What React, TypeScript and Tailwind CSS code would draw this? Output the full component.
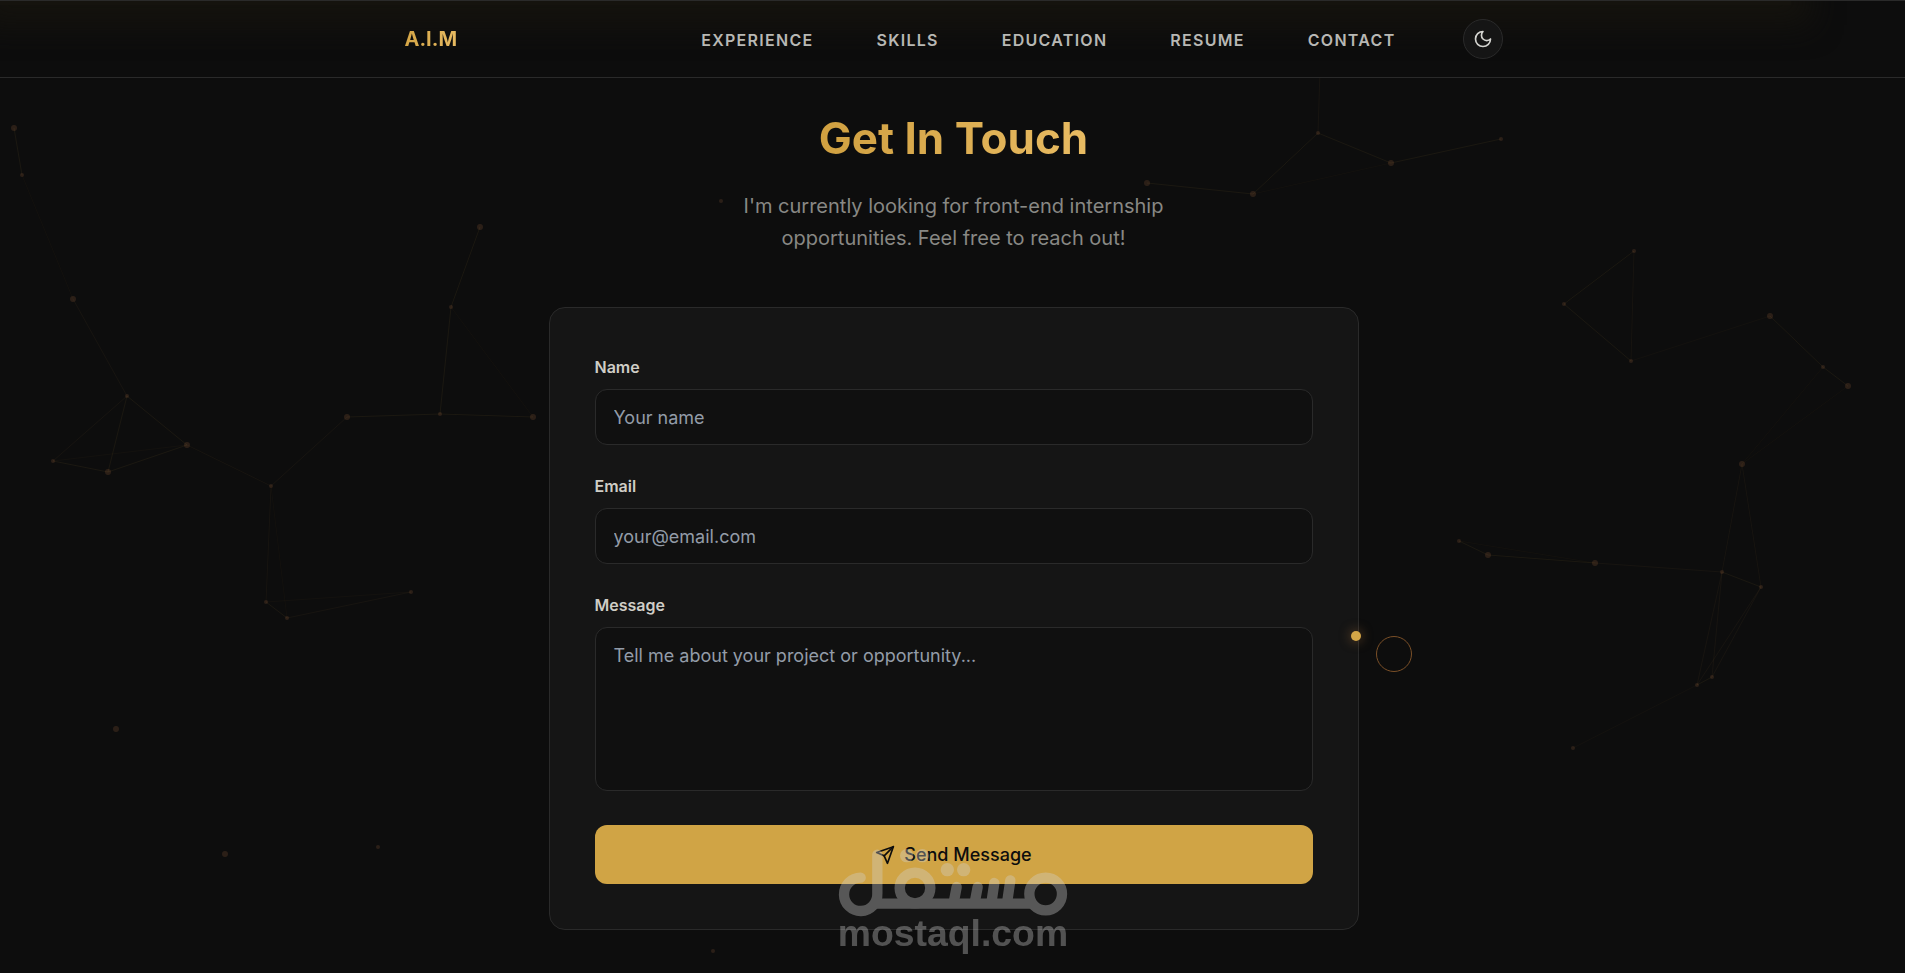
import React, { useState } from "react";

type Dot = [x: number, y: number, r: number];

const navLinks = ["Experience", "Skills", "Education", "Resume", "Contact"];

const dots: Dot[] = [
    [14, 128, 3], [22, 175, 2], [73, 299, 3], [127, 396, 2], [187, 445, 3],
    [53, 461, 2], [108, 472, 3], [271, 486, 2], [266, 602, 2], [287, 618, 2],
    [411, 592, 2], [347, 417, 3], [440, 414, 2], [533, 417, 3], [451, 307, 2],
    [480, 227, 3], [116, 729, 3], [225, 854, 3], [378, 847, 2], [713, 951, 2],
    [721, 201, 2], [1318, 133, 2], [1391, 163, 3], [1501, 139, 2], [1147, 183, 3],
    [1253, 194, 3], [1634, 251, 2], [1564, 304, 2], [1631, 361, 2], [1770, 316, 3],
    [1823, 367, 2], [1848, 386, 3], [1742, 464, 3], [1459, 541, 2], [1488, 555, 3],
    [1595, 563, 3], [1722, 572, 2], [1761, 587, 2], [1712, 677, 2], [1697, 685, 2],
    [1573, 748, 2],
];

// Pairs of dot indexes, split by how close the two dots are
const nearLinks = [
    [0, 1], [3, 4], [3, 6], [5, 6], [4, 6], [8, 9], [11, 12], [12, 13], [14, 15],
    [21, 22], [21, 25], [24, 25], [22, 23], [29, 30], [30, 31], [33, 34], [34, 35],
    [36, 37], [38, 39], [12, 14], [26, 27], [27, 28],
];

const farLinks = [
    [2, 3], [3, 5], [4, 7], [7, 8], [9, 10], [7, 11], [26, 28], [32, 36],
    [32, 37], [35, 36], [36, 38], [36, 39], [37, 38], [37, 39],
];

const faintLinks = [
    [1, 2], [4, 5], [7, 9], [8, 10], [13, 14], [22, 25], [28, 29], [30, 32],
    [31, 32], [33, 35], [39, 40],
];

function ParticleField() {
    const drawLink = ([a, b]: number[]) => (
        <line key={`${a}-${b}`} x1={dots[a][0]} y1={dots[a][1]} x2={dots[b][0]} y2={dots[b][1]} />
    );

    return (
        <svg
            className="absolute inset-0 w-full h-full pointer-events-none"
            viewBox="0 0 1905 973"
            preserveAspectRatio="xMidYMid slice"
            aria-hidden="true"
        >
            <g stroke="#d4a647" strokeOpacity="0.07">{nearLinks.map(drawLink)}</g>
            <g stroke="#d4a647" strokeOpacity="0.05">
                {farLinks.map(drawLink)}
                <line x1="1318" y1="133" x2="1320" y2="70" />
            </g>
            <g stroke="#d4a647" strokeOpacity="0.03">{faintLinks.map(drawLink)}</g>
            <g fill="#c47f50" fillOpacity="0.17">
                {dots.map(([x, y, r]) => (
                    <circle key={`${x}-${y}`} cx={x} cy={y} r={r} />
                ))}
            </g>
        </svg>
    );
}

function MoonIcon() {
    return (
        <svg width="20" height="20" viewBox="0 0 24 24" fill="none" stroke="currentColor" strokeWidth="2" strokeLinecap="round" strokeLinejoin="round" aria-hidden="true">
            <path d="M12 3a6 6 0 0 0 9 9 9 9 0 1 1-9-9Z" />
        </svg>
    );
}

function SendIcon() {
    return (
        <svg width="20" height="20" viewBox="0 0 24 24" fill="none" stroke="currentColor" strokeWidth="2" strokeLinecap="round" strokeLinejoin="round" aria-hidden="true">
            <path d="M22 2 11 13" />
            <path d="m22 2-7 20-4-9-9-4Z" />
        </svg>
    );
}

function Header() {
    return (
        <header className="relative h-[78px] px-6 border-y border-[#2a2a2a] bg-[#0d0d0d] overflow-hidden">
            <div className="absolute top-0 left-0 w-[94%] h-1 bg-[#15130e] shadow-[0_0_30px_20px_#15130e]" />

            <div className="relative max-w-[1100px] h-full mx-auto flex items-center justify-between">
                <a
                    href="#home"
                    className="px-[2px] text-xl leading-8 font-bold bg-gradient-to-r from-[#d4a545] to-[#e8bb62] bg-clip-text text-transparent"
                >
                    A.I.M
                </a>
                <div className="flex items-center gap-[67px]">
                    <nav className="flex items-center gap-[63px]">
                        {navLinks.map((label) => (
                            <a
                                key={label}
                                href={`#${label.toLowerCase()}`}
                                className="pt-[2px] text-base font-semibold uppercase tracking-[0.08em] text-[#b8b8b4]"
                            >
                                {label}
                            </a>
                        ))}
                    </nav>
                    <button
                        type="button"
                        aria-label="Toggle theme"
                        className="w-10 h-10 flex items-center justify-center rounded-full border border-[#2a2a2a] bg-[#151515] text-[#d4d4d0]"
                    >
                        <MoonIcon />
                    </button>
                </div>
            </div>
        </header>
    );
}

const labelClass = "text-base leading-7 font-semibold text-[#cfcdc6]";
const fieldClass =
    "w-full px-[18px] rounded-xl border border-[#2a2a2a] bg-[#101010] text-lg text-[#e5e5e5] placeholder:text-[#939ca8] outline-none";

function ContactForm() {
    const [name, setName] = useState("");
    const [email, setEmail] = useState("");
    const [message, setMessage] = useState("");

    return (
        <form
            onSubmit={(e) => e.preventDefault()}
            className="w-full max-w-[810px] mx-auto p-[45px] flex flex-col gap-[27px] rounded-2xl border border-[#2a2a2a] bg-[#151515]"
        >
            <div className="flex flex-col gap-2">
                <label htmlFor="name" className={labelClass}>Name</label>
                <input
                    id="name"
                    type="text"
                    placeholder="Your name"
                    value={name}
                    onChange={(e) => setName(e.target.value)}
                    className={`${fieldClass} h-14`}
                />
            </div>

            <div className="flex flex-col gap-2">
                <label htmlFor="email" className={labelClass}>Email</label>
                <input
                    id="email"
                    type="email"
                    placeholder="your@email.com"
                    value={email}
                    onChange={(e) => setEmail(e.target.value)}
                    className={`${fieldClass} h-14`}
                />
            </div>

            <div className="flex flex-col gap-2">
                <label htmlFor="message" className={labelClass}>Message</label>
                <textarea
                    id="message"
                    placeholder="Tell me about your project or opportunity..."
                    value={message}
                    onChange={(e) => setMessage(e.target.value)}
                    className={`${fieldClass} h-[164px] py-[14px] resize-none`}
                />
            </div>

            <button
                type="submit"
                className="mt-[7px] h-[59px] flex items-center justify-center gap-[9px] rounded-xl bg-[#d0a445] text-lg font-medium text-[#0d0d0d]"
            >
                <SendIcon />
                Send Message
            </button>
        </form>
    );
}

function Watermark() {
    return (
        <svg
            className="absolute left-1/2 bottom-[17px] -translate-x-1/2 w-[230px] h-[108px] pointer-events-none opacity-35"
            viewBox="112 145 690 324"
            role="img"
            aria-label="mostaql.com"
        >
            <g fill="none" stroke="#d2d2d2" strokeWidth="31" strokeLinecap="round">
                <path d="M230 165V282A50 50 0 1 1 180 234" />
                <path d="M222 312H698" strokeLinecap="butt" />
                <circle cx="343" cy="265" r="46" />
                <circle cx="735" cy="283" r="49" />
                <path d="M468 262 460 304M531 262 523 304M581 250 573 304M629 242 620 304" />
            </g>
            <g fill="#d2d2d2">
                <circle cx="318" cy="168" r="20" />
                <circle cx="365" cy="168" r="20" />
                <circle cx="440" cy="210" r="20" />
                <circle cx="489" cy="210" r="20" />
                <text x="457" y="438" textAnchor="middle" fontSize="112" fontWeight="700" fontFamily="'Liberation Sans', Arial, sans-serif">
                    mostaql.com
                </text>
            </g>
        </svg>
    );
}

export default function App() {
    return (
        <div className="relative min-h-screen overflow-hidden bg-[#0d0d0d] font-[Inter,sans-serif]">
            <ParticleField />
            <Header />

            <main className="relative pl-[26px] pr-6 pt-[34px] pb-[43px]">
                <div className="max-w-[540px] mx-auto mb-[53px] text-center">
                    <h2 className="w-fit mx-auto mb-[26px] text-[44px] leading-[52px] font-bold bg-gradient-to-r from-[#d0a040] to-[#e8bb62] bg-clip-text text-transparent">
                        Get In Touch
                    </h2>
                    <p className="text-xl leading-8 text-[#888884]">
                        I'm currently looking for front-end internship opportunities. Feel free to reach out!
                    </p>
                </div>
                <ContactForm />
            </main>

            {/* Custom cursor: dot and trailing ring */}
            <div className="absolute left-[1351px] top-[631px] w-[10px] h-[10px] rounded-full bg-[#d4a647] shadow-[0_0_12px_rgba(212,140,70,0.5)] pointer-events-none" />
            <div className="absolute left-[1376px] top-[636px] w-9 h-9 rounded-full border border-[#7a4f27] pointer-events-none" />

            <Watermark />
        </div>
    );
}
